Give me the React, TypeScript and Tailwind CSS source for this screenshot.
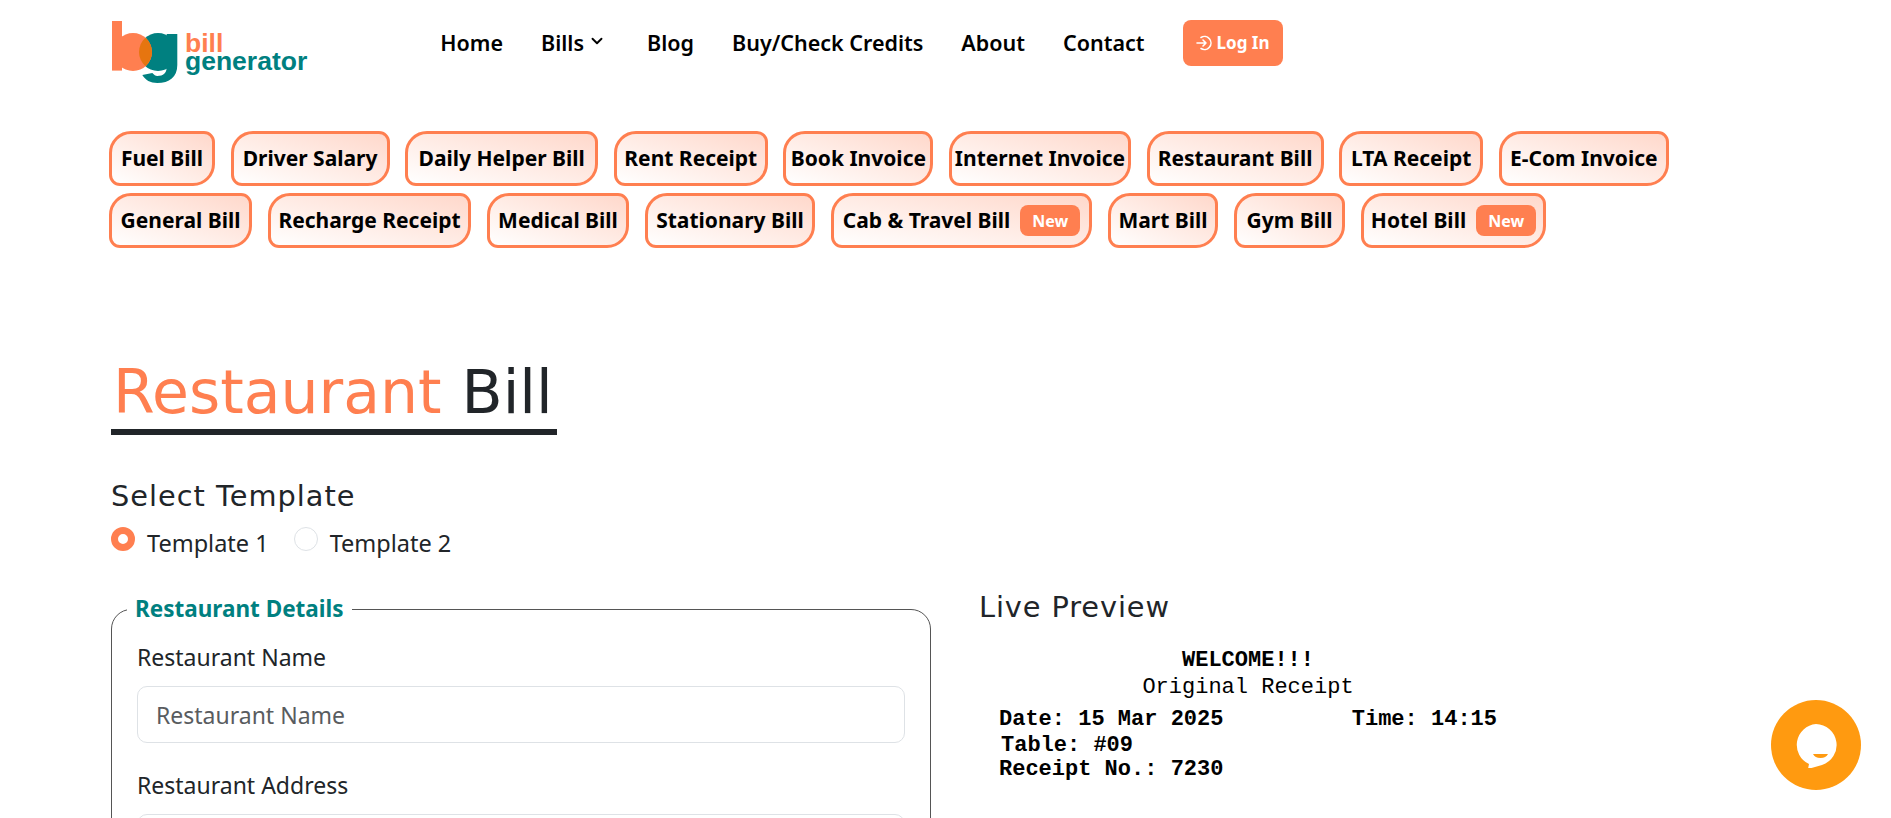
import { ChevronDown } from 'lucide-react';

const firstRow = [
  { label: 'Fuel Bill', width: 'w-[106px]' },
  { label: 'Driver Salary', width: 'w-[159px]' },
  { label: 'Daily Helper Bill', width: 'w-[193px]' },
  { label: 'Rent Receipt', width: 'w-[154px]' },
  { label: 'Book Invoice', width: 'w-[150px]' },
  { label: 'Internet Invoice', width: 'w-[182px]' },
  { label: 'Restaurant Bill', width: 'w-[177px]' },
  { label: 'LTA Receipt', width: 'w-[144px]' },
  { label: 'E-Com Invoice', width: 'w-[170px]' },
];

const secondRow = [
  { label: 'General Bill', width: 'w-[143px]' },
  { label: 'Recharge Receipt', width: 'w-[203px]' },
  { label: 'Medical Bill', width: 'w-[142px]' },
  { label: 'Stationary Bill', width: 'w-[170px]' },
  { label: 'Cab & Travel Bill', width: 'w-[261px]', isNew: true },
  { label: 'Mart Bill', width: 'w-[110px]' },
  { label: 'Gym Bill', width: 'w-[111px]' },
  { label: 'Hotel Bill', width: 'w-[185px]', isNew: true },
];

function Logo() {
  return (
    <div className="flex items-start">
      <svg width="74" height="66" viewBox="0 0 74 66" className="shrink-0">
        {/* g */}
        <circle cx="47" cy="32" r="19" fill="#008080" />
        <path d="M55.7 14h10.6v31c0 12-8 18-20 18-7 0-12-3-15-8l10-2c2 2 3 3 5 3 6 0 9.4-3 9.4-9z" fill="#008080" />
        {/* b */}
        <rect x="1" y="1" width="10" height="49.6" fill="#ff7f50" />
        <circle cx="22" cy="32" r="19" fill="#ff7f50" />
        {/* 重なり */}
        <path d="M34.5 17.7A19 19 0 0 1 34.5 46.3A19 19 0 0 1 34.5 17.7z" fill="#e6750f" />
      </svg>
      <div className="mt-[14px] flex flex-col font-['Liberation_Sans',sans-serif] text-[26.5px] leading-[18px] font-bold">
        <span className="text-[#ff7f50]">bill</span>
        <span className="text-[#008080]">generator</span>
      </div>
    </div>
  );
}

function Pill({ label, width, isNew }: { label: string; width: string; isNew?: boolean }) {
  return (
    <a className={`flex h-[55px] ${width} items-center justify-center gap-[10px] rounded-tl-[22px] rounded-tr-[11px] rounded-br-[22px] rounded-bl-[11px] border-[3px] border-[#ff7f50] bg-gradient-to-tr from-white to-[#ffd8cb] text-[21px] font-bold whitespace-nowrap text-black`}>
      {label}
      {isNew && (
        <span className="flex h-[31px] w-[60px] shrink-0 items-center justify-center rounded-[8px] bg-[#ff7f50] text-[16px] text-white">New</span>
      )}
    </a>
  );
}

export default function App() {
  return (
    <div className="h-[818px] overflow-hidden bg-white px-[111px] font-['Noto_Sans',sans-serif] text-[#212529]">
      {/* ナビ */}
      <header className="flex h-[86px] items-start pt-[20px]">
        <Logo />
        <nav className="ml-[133px] flex h-[46px] items-center gap-[38px] text-[21.5px] font-semibold text-black">
          <a>Home</a>
          <a className="flex items-center gap-[4px] pr-[3px]">
            Bills <ChevronDown size={18} strokeWidth={2.5} className="mb-[4px]" />
          </a>
          <a>Blog</a>
          <a>Buy/Check Credits</a>
          <a>About</a>
          <a>Contact</a>
          <a className="flex h-[46px] w-[100px] items-center justify-center gap-[5px] rounded-[8px] bg-[#ff7f50] text-[17px] font-bold text-white">
            <svg width="16" height="16" viewBox="0 0 16 16" fill="none" stroke="#fff" strokeWidth="1.6" strokeLinecap="round" strokeLinejoin="round">
              <path d="M1 8h9M7 5l3 3-3 3" />
              <path d="M5 2.5A6.5 6.5 0 1 1 5 13.5" />
            </svg>
            Log In
          </a>
        </nav>
      </header>

      {/* 請求書の種類 */}
      <div className="mt-[45px] ml-[-2px] flex flex-col gap-[7px]">
        <div className="flex gap-[15.6px]">
          {firstRow.map((item) => (
            <Pill key={item.label} label={item.label} width={item.width} />
          ))}
        </div>
        <div className="flex gap-[16px]">
          {secondRow.map((item) => (
            <Pill key={item.label} label={item.label} width={item.width} isNew={item.isNew} />
          ))}
        </div>
      </div>

      <h1 className="mt-[108px] flex font-['DejaVu_Sans',sans-serif] text-[60px] leading-[73px] font-normal">
        <span className="border-b-[6px] border-[#212529] pr-[20px] pl-[2px] text-[#ff7f50]">Restaurant</span>
        <span className="border-b-[6px] border-[#212529] pr-[4px]">Bill</span>
      </h1>

      <h2 className="mt-[43px] font-['DejaVu_Sans',sans-serif] text-[28.8px] leading-[36px] font-normal tracking-[1px]">Select Template</h2>

      <div className="mt-[11px] flex items-start">
        <span className="mt-[2px] h-[24px] w-[24px] rounded-full border-[7px] border-[#ff7f50] bg-white" />
        <span className="ml-[12px] text-[23.5px] leading-[36px]">Template 1</span>
        <span className="mt-[2px] ml-[25px] h-[24px] w-[24px] rounded-full border border-[#dee2e6] bg-white" />
        <span className="ml-[12px] text-[23.5px] leading-[36px]">Template 2</span>
      </div>

      <div className="mt-[32px] grid grid-cols-[820px_1fr] gap-[48px]">
        <fieldset className="rounded-[20px] border border-[#555] px-[25px] pb-[24px]">
          <legend className="ml-[-10px] px-[8px] text-[22.5px] leading-[32px] font-bold text-[#008080]">Restaurant Details</legend>
          <label className="mt-[16px] block text-[23px] leading-[32px]">Restaurant Name</label>
          <input
            placeholder="Restaurant Name"
            className="mt-[13px] h-[57px] w-full rounded-[10px] border border-[#dee2e6] px-[18px] text-[23px] placeholder:text-[#595c5f]"
          />
          <label className="mt-[26px] block text-[23px] leading-[32px]">Restaurant Address</label>
          <input
            placeholder="Restaurant Address"
            className="mt-[13px] h-[57px] w-full rounded-[10px] border border-[#dee2e6] px-[18px] text-[23px] placeholder:text-[#595c5f]"
          />
        </fieldset>

        <div>
          <h3 className="mt-[-4px] font-['DejaVu_Sans',sans-serif] text-[28.8px] leading-[36px] font-normal tracking-[0.9px]">Live Preview</h3>
          <div className="mt-[22px] ml-[20px] w-[498px] font-['Liberation_Mono',monospace] text-[22px] text-black">
            <p className="text-center leading-[27px] font-bold">WELCOME!!!</p>
            <p className="text-center leading-[28px]">Original Receipt</p>
            <div className="mt-[4px] flex justify-between leading-[27px] font-bold">
              <span>Date: 15 Mar 2025</span>
              <span>Time: 14:15</span>
            </div>
            <p className="ml-[2px] leading-[26px] font-bold">Table: #09</p>
            <p className="leading-[21px] font-bold">Receipt No.: 7230</p>
          </div>
        </div>
      </div>

      {/* チャットボタン */}
      <button className="fixed right-[30px] bottom-[28px] flex h-[90px] w-[90px] items-center justify-center rounded-full bg-[#ff9a10]">
        <svg width="46" height="46" viewBox="0 0 46 46">
          <path d="M23 2a21 21 0 0 1 6 41l-14 4 1-5A21 21 0 0 1 23 2z" fill="#fff" />
          <path d="M20 32h15a8 6 0 0 1-15 0z" fill="#ff9a10" />
        </svg>
      </button>
    </div>
  );
}
